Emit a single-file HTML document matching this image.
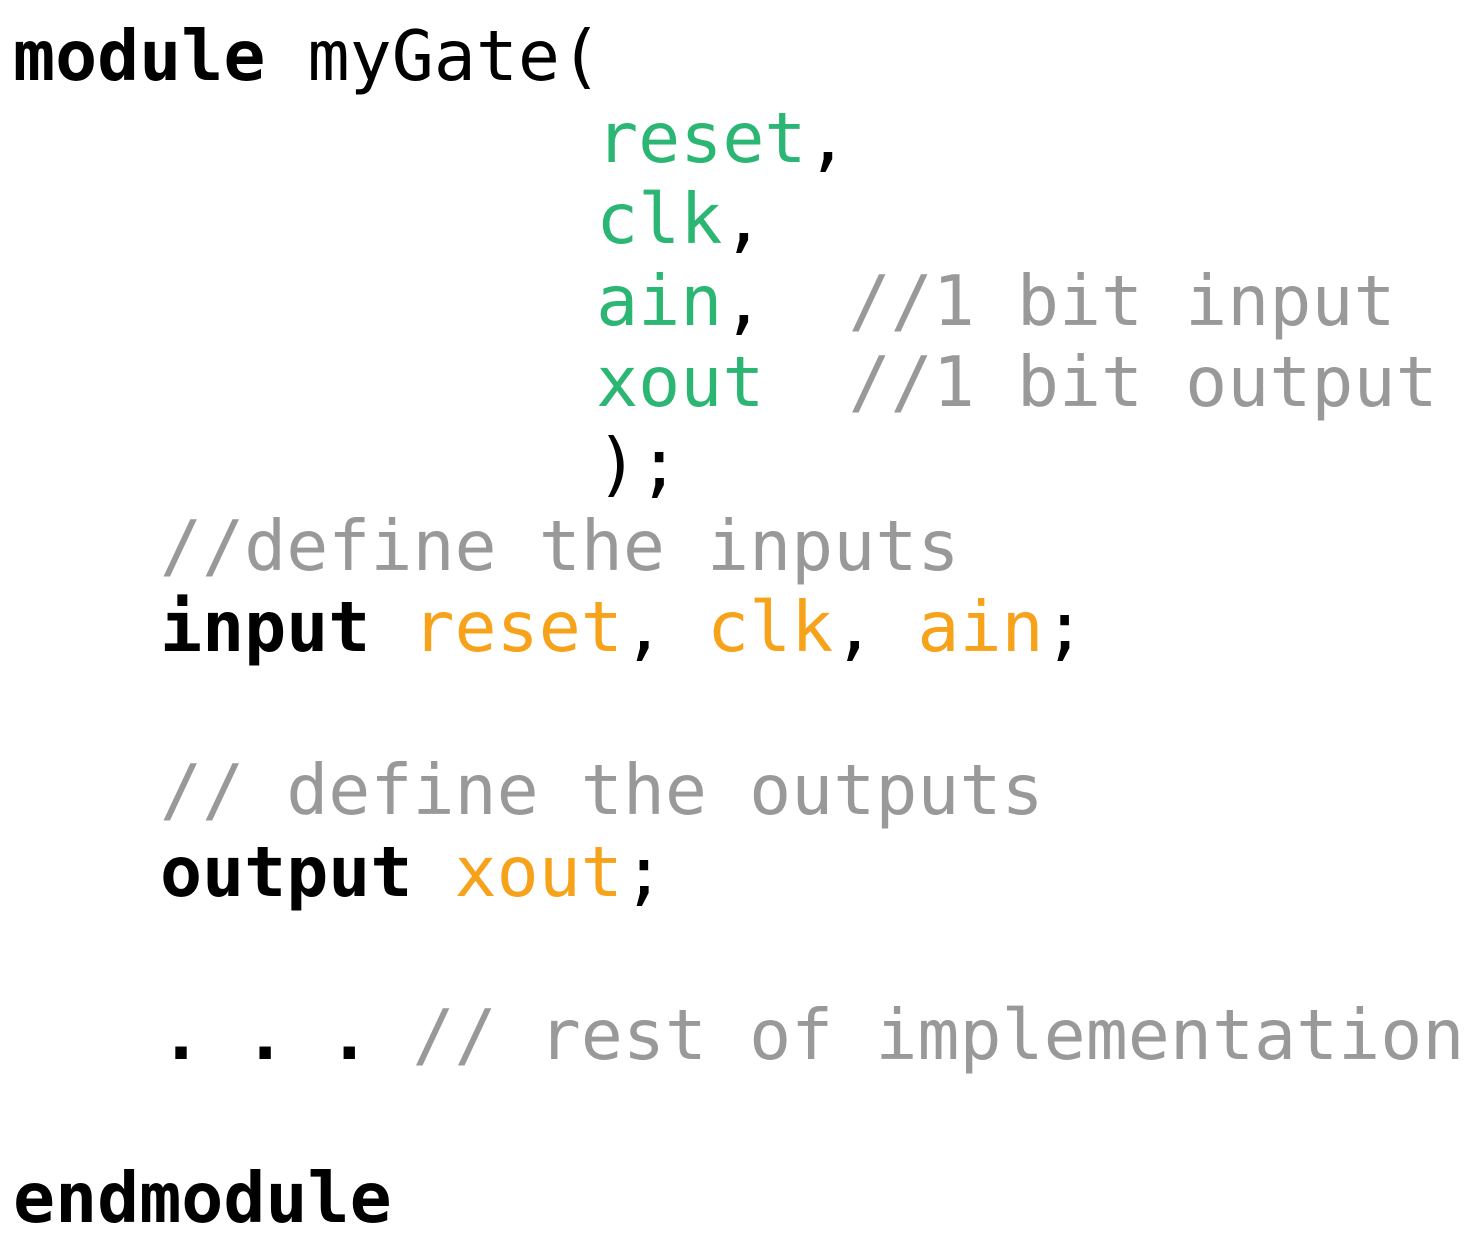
<!DOCTYPE html>
<html><head><meta charset="utf-8"><style>
html,body{margin:0;padding:0;background:#fff;width:1469px;height:1234px;overflow:hidden}
pre{position:absolute;left:13px;top:16px;margin:0;font-family:"DejaVu Sans Mono","Liberation Mono",monospace;font-size:69.9px;line-height:81.6px;color:#000;white-space:pre}
.k{font-weight:bold}
.g{color:#2bb673}
.o{color:#f7a21b}
.c{color:#999}
.i{display:inline-block;width:147px}
.s{position:relative;left:-6px}
</style></head><body>
<pre><span class="k">module</span> myGate(
<span class="s">              <span class="g">reset</span>,
              <span class="g">clk</span>,
              <span class="g">ain</span>,  <span class="c">//1 bit input</span>
              <span class="g">xout</span>  <span class="c">//1 bit output</span>
              );</span>
<span class="i"></span><span class="c">//define the inputs</span>
<span class="i"></span><span class="k">input</span> <span class="o">reset</span>, <span class="o">clk</span>, <span class="o">ain</span>;

<span class="i"></span><span class="c">// define the outputs</span>
<span class="i"></span><span class="k">output</span> <span class="o">xout</span>;

<span class="i"></span><span class="k">. . .</span> <span class="c">// rest of implementation</span>

<span class="k">endmodule</span></pre>
</body></html>
